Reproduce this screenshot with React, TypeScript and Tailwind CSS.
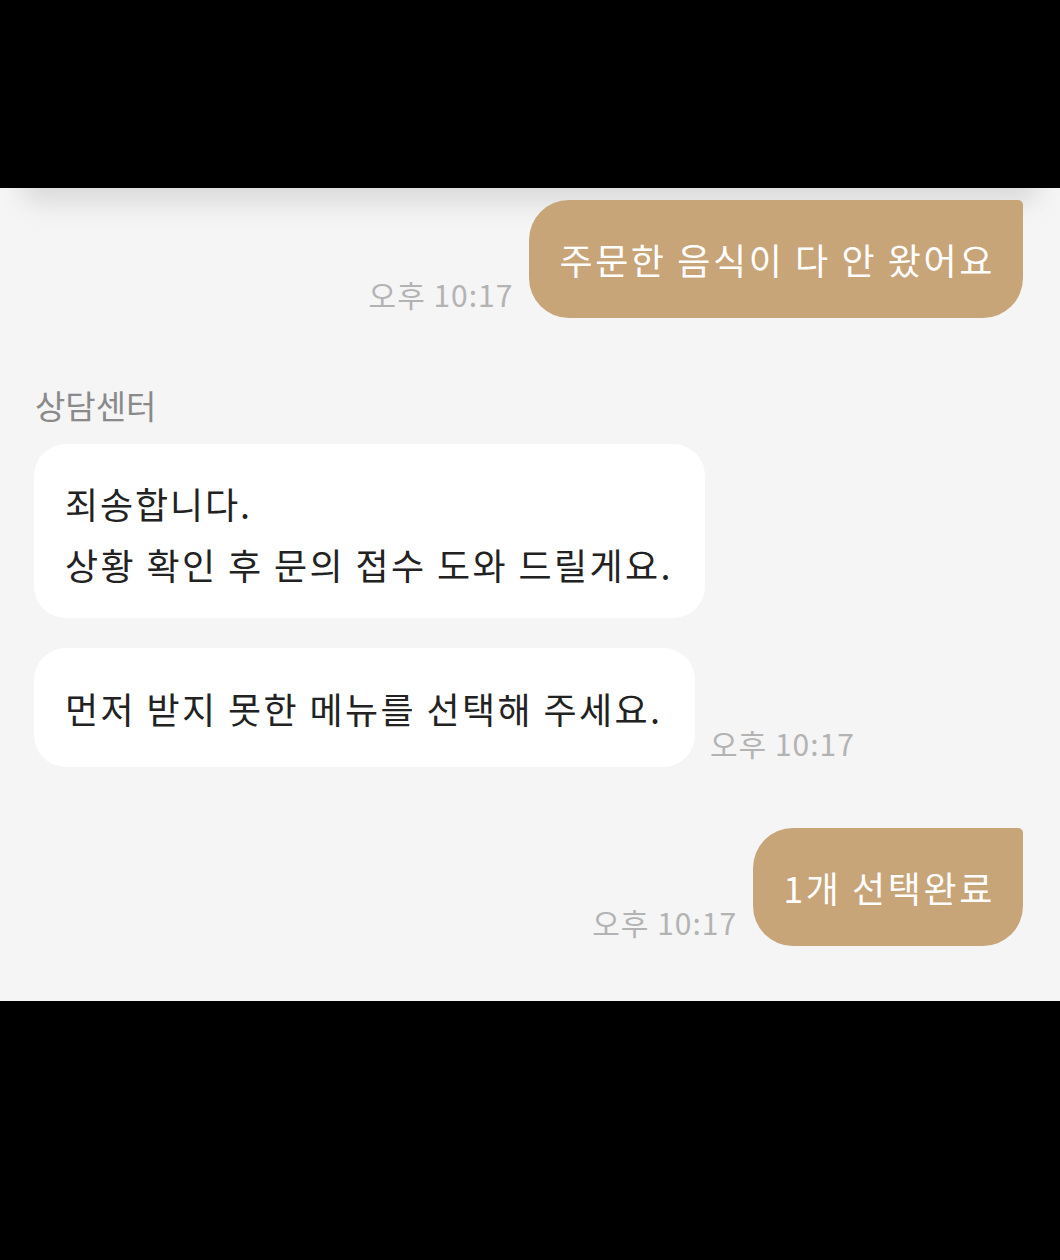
import React from 'react';

const FONT = "font-['Noto_Sans_CJK_KR',_'Noto_Sans',_sans-serif]";

interface SentProps {
  text: string;
  time: string;
}

const Time: React.FC<{ value: string }> = ({ value }) => (
  <span className="mb-[6px] text-[30px] leading-[36px] text-[#b3b3b3] tracking-[1px] whitespace-nowrap">{value}</span>
);

const SentMessage: React.FC<SentProps> = ({ text, time }) => (
  <div className="flex justify-end items-end gap-[16px] pr-[37px]">
    <Time value={time} />
    <div className="h-[118px] flex items-center pl-[30px] pr-[28px] bg-[#c8a479] rounded-[40px] rounded-tr-[5px] text-white text-[36px] leading-[44px] tracking-[2.6px] whitespace-nowrap">
      {text}
    </div>
  </div>
);

const App: React.FC = () => {
  return (
    <div className={`w-[1060px] h-[1260px] bg-black flex flex-col ${FONT}`}>
      <div className="h-[188px] shrink-0" />

      <main className="relative h-[813px] shrink-0 bg-[#f5f5f5] overflow-hidden">
        {/* header shadow */}
        <div className="absolute left-5 right-5 -top-6 h-10 rounded-full bg-black/10 blur-md" />

        <div className="relative pt-[12px]">
          <SentMessage text="주문한 음식이 다 안 왔어요" time="오후 10:17" />

          <div className="mt-[67px] pl-[35px] text-[33px] leading-[40px] text-[#8a8a8a]">상담센터</div>

          <div className="mt-[19px] ml-[34px] w-[671px] h-[174px] flex flex-col justify-center pt-[6px] px-[31px] bg-white rounded-[32px] text-[#222] text-[36px] leading-[61px] whitespace-nowrap">
            <p className="tracking-[1.9px]">죄송합니다.</p>
            <p className="tracking-[2.4px]">상황 확인 후 문의 접수 도와 드릴게요.</p>
          </div>

          <div className="mt-[30px] ml-[34px] flex items-end gap-[15px]">
            <div className="w-[661px] h-[119px] shrink-0 flex items-center px-[31px] bg-white rounded-[32px] text-[#222] text-[36px] leading-[44px] tracking-[2.4px] whitespace-nowrap">
              먼저 받지 못한 메뉴를 선택해 주세요.
            </div>
            <Time value="오후 10:17" />
          </div>

          <div className="mt-[61px]">
            <SentMessage text="1개 선택완료" time="오후 10:17" />
          </div>
        </div>
      </main>

      <div className="flex-1" />
    </div>
  );
};

export default App;
